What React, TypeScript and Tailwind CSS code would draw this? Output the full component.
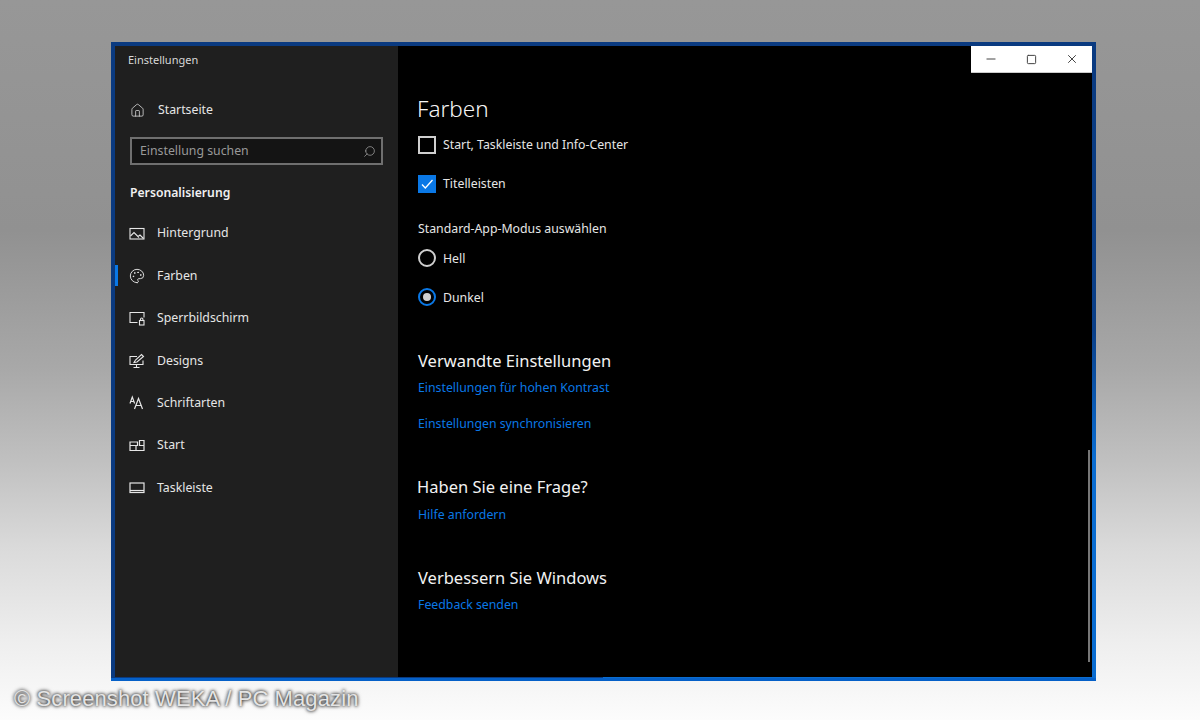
import { Home, Minus, Palette, Search, Square, X } from 'lucide-react';
import type { ReactNode } from 'react';

function PictureIcon() {
  return (
    <svg width="16" height="16" viewBox="0 0 16 16" fill="none" stroke="currentColor" strokeWidth="1.1">
      <rect x="1" y="2.5" width="14" height="10.5" />
      <path d="M1.5 10L5 6.5L10 11.5M9 10.5L11 9L14.5 12.5" />
    </svg>
  );
}

function LockScreenIcon() {
  return (
    <svg width="16" height="16" viewBox="0 0 16 16" fill="none" stroke="currentColor" strokeWidth="1.1">
      <path d="M8.5 12.5H1V2.5H15V7.5" />
      <rect x="10.5" y="10.5" width="4.5" height="4.5" />
      <path d="M11.5 10.5V9.2a1.2 1.2 0 0 1 2.4 0V10.5" />
    </svg>
  );
}

function DesignsIcon() {
  return (
    <svg width="16" height="16" viewBox="0 0 16 16" fill="none" stroke="currentColor" strokeWidth="1.1">
      <path d="M8 3.5H1V11.5H14V7.5" />
      <path d="M4.5 14.5H10.5M7.5 11.5V14.5" />
      <path d="M5 9.5L6.5 7L12.5 1.5L14.5 3.5L8 9L5 9.5Z" />
    </svg>
  );
}

function FontsIcon() {
  return (
    <svg width="16" height="16" viewBox="0 0 16 16" fill="none" stroke="currentColor" strokeWidth="1.2">
      <path d="M1 8.5L3.3 2L5.6 8.5M1.8 6.5H4.8" />
      <path d="M5.5 14L9.5 3.5L13.5 14M7 10.5H12" />
    </svg>
  );
}

function StartIcon() {
  return (
    <svg width="16" height="16" viewBox="0 0 16 16" fill="none" stroke="currentColor" strokeWidth="1.2">
      <path d="M1 4H8.5V7.5H1ZM10.5 2.5H15V7.5H10.5ZM1 7.5V12.5H7V7.5M7 12.5H15V7.5" />
    </svg>
  );
}

function TaskbarIcon() {
  return (
    <svg width="16" height="16" viewBox="0 0 16 16" fill="none" stroke="currentColor" strokeWidth="1.2">
      <rect x="1" y="3" width="14" height="9.5" />
      <path d="M1 10.5H15" />
    </svg>
  );
}

const navItems: { label: string; icon: ReactNode; active?: boolean }[] = [
  { label: 'Hintergrund', icon: <PictureIcon /> },
  { label: 'Farben', icon: <Palette size={16} strokeWidth={1.4} />, active: true },
  { label: 'Sperrbildschirm', icon: <LockScreenIcon /> },
  { label: 'Designs', icon: <DesignsIcon /> },
  { label: 'Schriftarten', icon: <FontsIcon /> },
  { label: 'Start', icon: <StartIcon /> },
  { label: 'Taskleiste', icon: <TaskbarIcon /> },
];

function Sidebar() {
  return (
    <aside className="w-[283px] shrink-0 bg-[#1f1f1f] text-[#e6e6e6] flex flex-col">
      <div className="h-[28px] pl-[13px] pt-[6px] text-[11px] leading-[16px] text-[#d8d8d8]">Einstellungen</div>

      <div className="h-[42px] mt-[15px] flex items-center gap-[13px] pl-[15px] text-[12.3px]">
        <Home size={15} strokeWidth={1.2} />
        <span>Startseite</span>
      </div>

      <div className="mx-[15px] mt-[6px] h-[28px] border-2 border-[#6f6f6f] bg-[#141414] flex items-center justify-between pl-[8px] pr-[5px] text-[12.3px] text-[#999999]">
        <span>Einstellung suchen</span>
        <Search size={13} strokeWidth={1.2} className="-scale-x-100 text-[#b5b5b5]" />
      </div>

      <div className="pl-[15px] mt-[19px] text-[12.2px] leading-[18px] font-semibold text-[#f0f0f0]">Personalisierung</div>

      <nav className="mt-[10.5px] flex flex-col">
        {navItems.map((item) => (
          <div key={item.label} className="relative h-[42.4px] flex items-center gap-[12px] pl-[14px] text-[12.3px]">
            {item.active && <span className="absolute left-0 top-[10px] h-[21px] w-[3px] bg-[#0a78e6]" />}
            <span className="w-[16px] flex justify-center">{item.icon}</span>
            <span>{item.label}</span>
          </div>
        ))}
      </nav>
    </aside>
  );
}

function Check({ label, checked }: { label: string; checked?: boolean }) {
  return (
    <div className="h-[39px] flex items-center gap-[7px] text-[12.3px] text-[#e6e6e6]">
      {checked ? (
        <span className="w-[18px] h-[18px] bg-[#0a78e6] flex items-center justify-center">
          <svg width="14" height="14" viewBox="0 0 14 14" fill="none" stroke="white" strokeWidth="1.3">
            <path d="M2 7.5L5.3 11L12.5 3" />
          </svg>
        </span>
      ) : (
        <span className="w-[18px] h-[18px] border-2 border-[#cfcfcf]" />
      )}
      <span className="pt-[2px]">{label}</span>
    </div>
  );
}

function Radio({ label, selected }: { label: string; selected?: boolean }) {
  return (
    <div className="h-[39px] flex items-center gap-[7px] text-[12.3px] text-[#e6e6e6]">
      {selected ? (
        <span className="w-[18px] h-[18px] rounded-full border-2 border-[#0a78e6] flex items-center justify-center">
          <span className="w-[8px] h-[8px] rounded-full bg-[#d0d0d0]" />
        </span>
      ) : (
        <span className="w-[18px] h-[18px] rounded-full border-2 border-[#cfcfcf]" />
      )}
      <span className="pt-[4px]">{label}</span>
    </div>
  );
}

function Heading({ children, className }: { children: ReactNode; className: string }) {
  return <h2 className={`text-[16.5px] leading-[22px] text-[#f2f2f2] ${className}`}>{children}</h2>;
}

function Content() {
  return (
    <main className="relative flex-1 bg-black pl-[20px]">
      <div className="absolute right-0 top-0 w-[121px] h-[27px] bg-white border-b border-[#cccccc] flex text-[#444444]">
        <span className="flex-1 flex items-center justify-center"><Minus size={14} strokeWidth={1} absoluteStrokeWidth /></span>
        <span className="flex-1 flex items-center justify-center"><Square size={11} strokeWidth={1} absoluteStrokeWidth /></span>
        <span className="flex-1 flex items-center justify-center"><X size={14} strokeWidth={1} absoluteStrokeWidth /></span>
      </div>
      <div className="absolute right-[2px] top-[404px] w-[2px] h-[212px] bg-[#777777]" />

      <h1 className="-ml-[1px] pt-[44px] text-[22.5px] leading-[38px] font-light text-[#f5f5f5]">Farben</h1>
      <div className="-mt-[3px]">
        <Check label="Start, Taskleiste und Info-Center" />
        <Check label="Titelleisten" checked />
      </div>
      <div className="mt-[16px] h-[20px] text-[12.3px] leading-[20px] text-[#e6e6e6]">Standard-App-Modus auswählen</div>
      <div className="-mt-[1px]">
        <Radio label="Hell" />
        <Radio label="Dunkel" selected />
      </div>

      <Heading className="mt-[34px]">Verwandte Einstellungen</Heading>
      <a className="block mt-[7px] text-[12.3px] leading-[18px] text-[#0a78e6]">Einstellungen für hohen Kontrast</a>
      <a className="block mt-[18px] text-[12.3px] leading-[18px] text-[#0a78e6]">Einstellungen synchronisieren</a>

      <Heading className="-ml-[1px] mt-[43px]">Haben Sie eine Frage?</Heading>
      <a className="block mt-[8px] text-[12.3px] leading-[18px] text-[#0a78e6]">Hilfe anfordern</a>

      <Heading className="mt-[43px]">Verbessern Sie Windows</Heading>
      <a className="block mt-[7px] text-[12.3px] leading-[18px] text-[#0a78e6]">Feedback senden</a>
    </main>
  );
}

export default function App() {
  return (
    <div className="w-[1200px] h-[720px] overflow-hidden pt-[42px] font-['Noto_Sans','Open_Sans',sans-serif] bg-[linear-gradient(to_bottom,#979797_0%,#919191_32%,#a8a8a8_51%,#c0c0c0_64%,#dadada_76%,#eeeeee_89%,#fcfcfc_100%)]">
      <div className="ml-[111px] w-[985px] h-[639px] flex p-[4px] bg-[linear-gradient(to_top,#0560c8_3px,transparent_3px),linear-gradient(to_right,#0a3a80_50%,transparent_50%),linear-gradient(to_bottom,#0a3a80_0%,#0a3f88_45%,#0a6cd0_65%,#0a6cd0_100%)]">
        <Sidebar />
        <Content />
      </div>
      <div className="mt-[5px] pl-[14px] text-[22px] leading-[26px] tracking-[0.1px] font-['Liberation_Sans',sans-serif] text-[#e4e4e4] [text-shadow:0_0_3px_#222222,0_0_4px_#444444]">
        © Screenshot WEKA / PC Magazin
      </div>
    </div>
  );
}
